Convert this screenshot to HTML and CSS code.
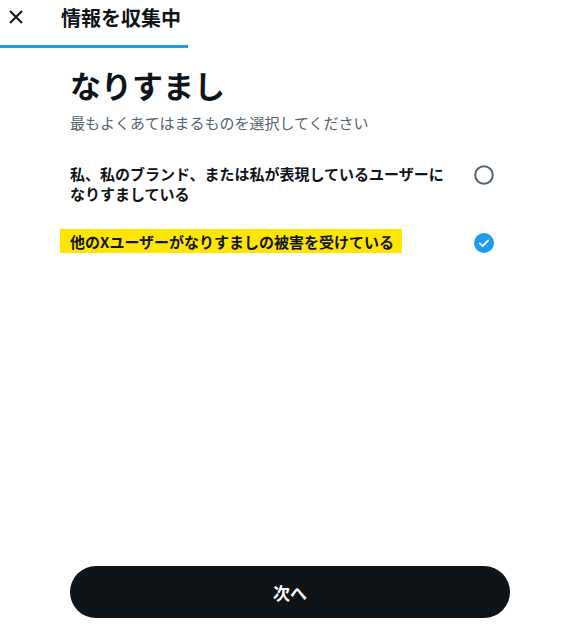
FILE: index.html
```html
<!DOCTYPE html>
<html lang="ja">
<head>
<meta charset="utf-8">
<title>なりすまし</title>
<link rel="stylesheet" href="styles.css">
</head>
<body>
<div class="page">
  <header class="topbar">
    <div class="tabrow">
      <button class="close" aria-label="閉じる">
        <svg viewBox="0 0 20 20" width="20" height="20"><path d="M4 4 L16 16 M16 4 L4 16" stroke="#0f1419" stroke-width="2" fill="none"/></svg>
      </button>
      <h2 class="tabtitle">情報を収集中</h2>
    </div>
    <div class="tabline"></div>
  </header>
  <main class="content">
    <h1 class="heading">なりすまし</h1>
    <p class="sub">最もよくあてはまるものを選択してください</p>
    <div class="options">
      <div class="option">
        <div class="opt-text">私、私のブランド、または私が表現しているユーザーになりすましている</div>
        <svg class="radio" viewBox="0 0 20 20" width="20" height="20"><circle cx="10" cy="10" r="8.8" stroke="#536471" stroke-width="2" fill="none"/></svg>
      </div>
      <div class="option">
        <div class="opt-text"><span class="mark">他のXユーザーがなりすましの被害を受けている</span></div>
        <svg class="radio" viewBox="0 0 20 20" width="20" height="20"><circle cx="10" cy="10" r="10" fill="#1d9bf0"/><path d="M5.8 10.4 L8.7 13.2 L14.2 7.4" stroke="#fff" stroke-width="1.8" fill="none" stroke-linecap="round" stroke-linejoin="round"/></svg>
      </div>
    </div>
  </main>
  <footer class="footer">
    <button class="next">次へ</button>
  </footer>
</div>
</body>
</html>
```
FILE: styles.css
```css
html, body {
  margin: 0;
  padding: 0;
  background: #fff;
}
body {
  font-family: "Noto Sans CJK JP", "Noto Sans", sans-serif;
  color: #0f1419;
}
.page {
  height: 632px;
  display: flex;
  flex-direction: column;
}
.tabrow {
  height: 45px;
  display: flex;
  align-items: flex-start;
  padding-top: 6px;
  box-sizing: border-box;
}
.close {
  border: 0;
  background: none;
  padding: 0;
  margin: 1px 0 0 6px;
  width: 20px;
  height: 20px;
  display: block;
}
.close svg { display: block; }
.tabtitle {
  margin: 0 0 0 35px;
  font-size: 20px;
  line-height: 24px;
  font-weight: 700;
}
.tabline {
  width: 188px;
  height: 3px;
  background: #1d9bf0;
}
.content {
  flex: 1;
  padding: 0 70px;
}
.heading {
  margin: 19px 0 0;
  font-size: 31px;
  line-height: 36px;
  font-weight: 700;
}
.sub {
  margin: 10px 0 0;
  font-size: 15px;
  line-height: 20px;
  color: #536471;
}
.options {
  margin-top: 31px;
  display: flex;
  flex-direction: column;
  gap: 28px;
}
.option {
  display: flex;
  align-items: flex-start;
}
.opt-text {
  flex: 1;
  padding-right: 24px;
  font-size: 15px;
  line-height: 20px;
  font-weight: 700;
}
.mark {
  background: #ffe600;
  padding: 2px 8px 1px 10px;
  margin-left: -10px;
}
.radio {
  flex: none;
  margin: 1px 16px 0 0;
  display: block;
}
.footer {
  padding: 0 70px 14px;
}
.next {
  width: 100%;
  height: 52px;
  border: 0;
  border-radius: 26px;
  background: #0f1419;
  color: #fff;
  font-family: inherit;
  font-size: 17px;
  font-weight: 700;
}
```
